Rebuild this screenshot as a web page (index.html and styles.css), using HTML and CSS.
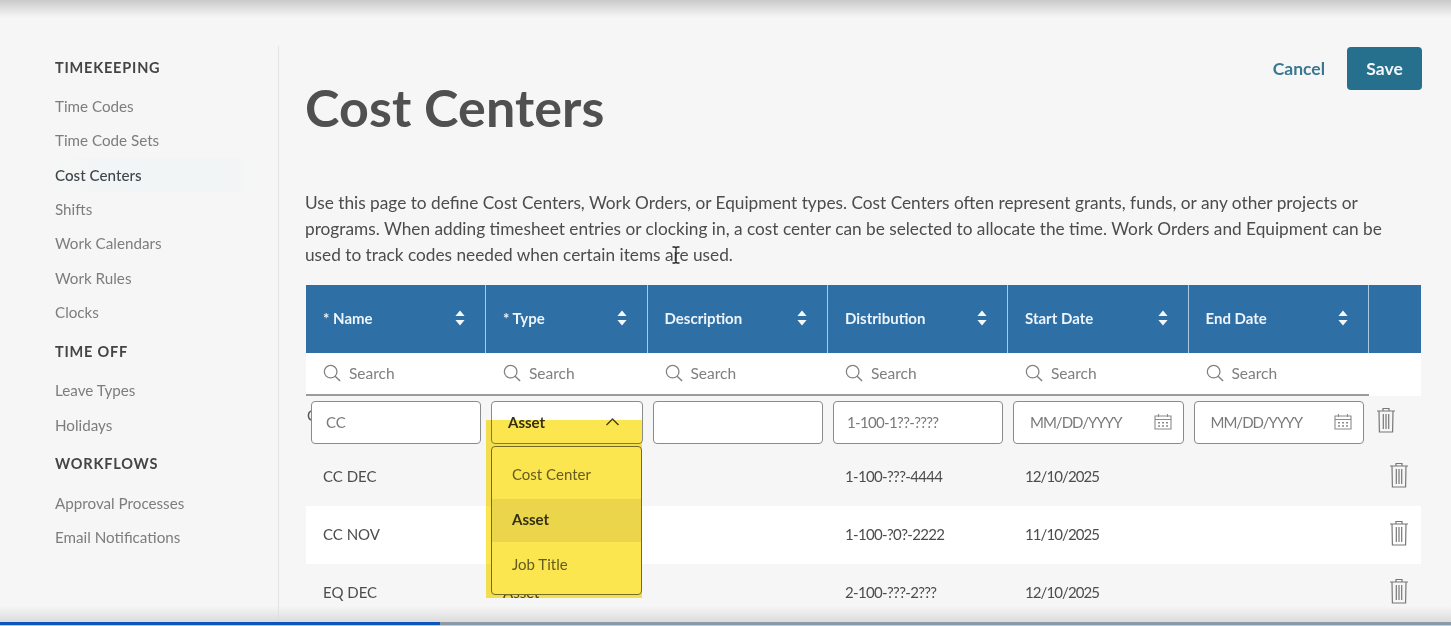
FILE: index.html
```html
<!DOCTYPE html>
<html lang="en">
<head>
<meta charset="utf-8">
<title>Cost Centers</title>
<link rel="stylesheet" href="styles.css">
</head>
<body>
<svg class="defs" width="0" height="0">
  <defs>
    <symbol id="sort" viewBox="0 0 10 16"><path d="M5 .5 9.600 6H.4zM.4 10h9.200L5 15.500z" fill="currentColor"/></symbol>
    <symbol id="search" viewBox="0 0 20 20"><circle cx="8.500" cy="8.500" r="7" fill="none" stroke="currentColor" stroke-width="1.400"/><path d="m13.500 13.500 5.500 5.500" fill="none" stroke="currentColor" stroke-width="1.600"/></symbol>
    <symbol id="cal" viewBox="0 0 18 17"><path d="M1 3h16v13H1zM1 6.500h16M4.500 1v3M13.500 1v3" fill="none" stroke="currentColor" stroke-width="1.100"/><path d="M4 9h2v1.500H4zM8 9h2v1.500H8zM12 9h2v1.500h-2zM4 12.300h2v1.500H4zM8 12.300h2v1.500H8zM12 12.300h2v1.500h-2z" fill="currentColor"/></symbol>
    <symbol id="trash" viewBox="0 0 20 26"><path d="M1 4h18M7 4V1.500h6V4M3 4l.4 21h13.200L17 4M7.300 7v15M10 7v15M12.700 7v15" fill="none" stroke="currentColor" stroke-width="1.200"/></symbol>
  </defs>
</svg>
<div class="page">
  <nav class="side">
    <h2 class="side-h">TIMEKEEPING</h2>
    <a class="side-i">Time Codes</a>
    <a class="side-i">Time Code Sets</a>
    <a class="side-i active">Cost Centers</a>
    <a class="side-i">Shifts</a>
    <a class="side-i">Work Calendars</a>
    <a class="side-i">Work Rules</a>
    <a class="side-i">Clocks</a>
    <h2 class="side-h">TIME OFF</h2>
    <a class="side-i">Leave Types</a>
    <a class="side-i">Holidays</a>
    <h2 class="side-h">WORKFLOWS</h2>
    <a class="side-i">Approval Processes</a>
    <a class="side-i">Email Notifications</a>
  </nav>
  <main class="main">
    <div class="top">
      <h1 class="title">Cost Centers</h1>
      <div class="actions">
        <button class="cancel">Cancel</button>
        <button class="save">Save</button>
      </div>
    </div>
    <p class="intro">Use this page to define Cost Centers, Work Orders, or Equipment types. Cost Centers often represent grants, funds, or any other projects or programs. When adding timesheet entries or clocking in, a cost center can be selected to allocate the time. Work Orders and Equipment can be used to track codes needed when certain items are used.</p>
    <div class="table">
      <div class="row head">
        <div class="th"><span>* Name</span><svg class="sort"><use href="#sort"/></svg></div>
        <div class="th"><span>* Type</span><svg class="sort"><use href="#sort"/></svg></div>
        <div class="th"><span>Description</span><svg class="sort"><use href="#sort"/></svg></div>
        <div class="th"><span>Distribution</span><svg class="sort"><use href="#sort"/></svg></div>
        <div class="th"><span>Start Date</span><svg class="sort"><use href="#sort"/></svg></div>
        <div class="th"><span>End Date</span><svg class="sort"><use href="#sort"/></svg></div>
        <div class="th"></div>
      </div>
      <div class="row filters">
        <div class="fc"><svg class="mag"><use href="#search"/></svg>Search</div>
        <div class="fc"><svg class="mag"><use href="#search"/></svg>Search</div>
        <div class="fc"><svg class="mag"><use href="#search"/></svg>Search</div>
        <div class="fc"><svg class="mag"><use href="#search"/></svg>Search</div>
        <div class="fc"><svg class="mag"><use href="#search"/></svg>Search</div>
        <div class="fc"><svg class="mag"><use href="#search"/></svg>Search</div>
        <div class="fc blank"></div>
      </div>
      <div class="row edit">
        <div class="ec"><span class="behind">C</span><div class="inp name">CC</div></div>
        <div class="ec"><div class="inp sel">Asset<svg class="chev" viewBox="0 0 14 8"><path d="M1 7l6-6 6 6" fill="none" stroke="currentColor" stroke-width="1.400"/></svg></div></div>
        <div class="ec"><div class="inp"></div></div>
        <div class="ec"><div class="inp dist">1-100-1??-????</div></div>
        <div class="ec"><div class="inp date">MM/DD/YYYY<svg class="cal"><use href="#cal"/></svg></div></div>
        <div class="ec"><div class="inp date">MM/DD/YYYY<svg class="cal"><use href="#cal"/></svg></div></div>
        <div class="ec tr"><svg class="trash"><use href="#trash"/></svg></div>
      </div>
      <div class="row data">
        <div class="td">CC DEC</div><div class="td"></div><div class="td"></div><div class="td dist">1-100-???-4444</div><div class="td date">12/10/2025</div><div class="td"></div>
        <div class="td del"><svg class="trash"><use href="#trash"/></svg></div>
      </div>
      <div class="row data alt">
        <div class="td">CC NOV</div><div class="td"></div><div class="td"></div><div class="td dist">1-100-?0?-2222</div><div class="td date">11/10/2025</div><div class="td"></div>
        <div class="td del"><svg class="trash"><use href="#trash"/></svg></div>
      </div>
      <div class="row data">
        <div class="td">EQ DEC</div><div class="td">Asset</div><div class="td"></div><div class="td dist">2-100-???-2???</div><div class="td date">12/10/2025</div><div class="td"></div>
        <div class="td del"><svg class="trash"><use href="#trash"/></svg></div>
      </div>
      <ul class="menu">
        <li>Cost Center</li>
        <li class="cur">Asset</li>
        <li>Job Title</li>
      </ul>
      <div class="hl"></div>
    </div>
  </main>
</div>
<div class="shade-top"></div>
<div class="shade-bot"></div>
<div class="progress"><div class="played"></div></div>
<svg class="ibeam" viewBox="0 0 9 18"><path d="M1 1h2.500L4.500 2l1-1H8M4.500 2v14M1 17h2.500l1-1 1 1H8" fill="none" stroke="#222" stroke-width="1.300"/></svg>
</body>
</html>
```
FILE: styles.css
```css
* { box-sizing: border-box; }
html, body { margin: 0; height: 626px; overflow: hidden; }
body { background: #f6f6f6; font-family: "Lato", "Liberation Sans", sans-serif; color: #4a4a4a; position: relative; }
.defs { position: absolute; }
.page { display: flex; height: 626px; padding-top: 46px; }

.side { width: 279px; flex: none; border-right: 1px solid #e3e3e3; padding-left: 55px; display: flex; flex-direction: column; }
.side-h { margin: 0; height: 43.600px; line-height: 43.600px; font-size: 14.500px; font-weight: 700; letter-spacing: .8px; color: #444; flex: none; }
.side-h:first-child { height: 42.800px; line-height: 44px; }
.side-i { height: 34.400px; line-height: 34.400px; font-size: 15.200px; color: #7d7d7d; flex: none; }
.side-i.active { color: #3f474c; background: linear-gradient(90deg, #f6f6f6, #f1f5f5 30%, #f1f5f5 85%, #f6f6f6); width: 198px; font-weight: 500; }

.main { flex: 1; padding-left: 26px; padding-right: 29px; min-width: 0; }
.top { display: flex; justify-content: space-between; align-items: flex-start; height: 144px; }
.title { margin: 29px 0 0; font-size: 52px; line-height: 64px; font-weight: 700; color: #505050; letter-spacing: .1px; }
.actions { display: flex; align-items: center; gap: 22px; margin-top: 1px; }
.cancel { border: 0; background: none; padding: 0; font: 700 17.500px "Lato", sans-serif; color: #3a7790; }
.save { width: 75px; height: 43px; border: 0; border-radius: 4px; background: #266f8d; color: #f2f7f9; font: 700 17.500px "Lato", sans-serif; }

.intro { margin: 0; width: 1100px; height: 95px; font-size: 17.250px; line-height: 25.800px; color: #4c4c4c; }

.table { position: relative; margin-left: 1px; width: 1115px; }
.row { display: grid; grid-template-columns: 180px 161.500px 180.500px 180px 180.500px 180px 52.500px; }
.head { height: 68px; background: #2e6fa6; }
.th { display: flex; align-items: center; justify-content: space-between; padding: 0 20px 2px 17px; color: #eef4f9; font-size: 15px; font-weight: 700; border-right: 1px solid #a9cbe4; }
.th:last-child { border: 0; }
.sort { width: 10px; height: 16px; color: #f4f7fa; }

.filters { height: 43px; }
.fc { background: #fff; display: flex; align-items: center; gap: 8px; padding: 0 0 1px 17px; font-size: 15.500px; color: #7f7f7f; border-bottom: 2px solid #9c9c9c; }
.fc.blank { border-bottom: 0; }
.mag { width: 18px; height: 18px; color: #808080; }

.edit { height: 52px; }
.ec { padding: 5px 5px 0; position: relative; }
.inp { height: 43px; border: 1.500px solid #8b8b8b; border-radius: 4px; background: #fff; padding: 0 0 2px 16px; display: flex; align-items: center; justify-content: space-between; font-size: 15px; color: #7a7a7a; position: relative; }
.inp.name { padding-left: 14px; }
.inp.sel { color: #333; font-weight: 700; }
.inp.dist { padding-left: 13px; letter-spacing: -.65px; }
.inp.date { letter-spacing: -1px; }
.behind { position: absolute; left: 1px; top: 10px; font-size: 15px; color: #555; }
.chev { width: 15px; height: 8px; margin-right: 22px; color: #444; }
.cal { width: 18px; height: 17px; margin-right: 11px; color: #8a8a8a; }
.tr { padding: 11px 0 0 7px; }
.trash { width: 20px; height: 26px; color: #777; display: block; }

.data { height: 58px; }
.td { display: flex; align-items: center; padding-left: 17px; padding-bottom: 2px; font-size: 15px; color: #4d4d4d; }
.td.dist { letter-spacing: -.65px; }
.td.date { letter-spacing: -.9px; }
.alt { background: #fff; }
.del { padding-left: 20px; padding-bottom: 4px; }

.menu { position: absolute; left: 185px; top: 161px; width: 151px; height: 149px; margin: 0; padding: 7px 0 0; list-style: none; border: 1.500px solid #777; border-radius: 4px; background: #fff; font-size: 15px; color: #666; }
.menu li { height: 45px; line-height: 41px; padding-left: 20px; }
.menu .cur { background: #eee; color: #333; font-weight: 700; height: 43px; margin: 0 0 2px; }
.hl { position: absolute; left: 180px; top: 135px; width: 156px; height: 178px; background: #fce650; mix-blend-mode: multiply; }

.shade-top { position: absolute; left: 0; right: 0; top: 0; height: 18px; background: linear-gradient(#c9c9c9, #e6e6e6 60%, #f6f6f6); }
.shade-bot { position: absolute; left: 0; right: 0; bottom: 4px; height: 16px; background: linear-gradient(rgba(246,246,246,0), #dcdcdc); }
.progress { position: absolute; left: 0; right: 0; bottom: 0; height: 4px; background: #8d9aa6; border-bottom: 1px solid #a9d4ef; }
.played { width: 440px; height: 3px; background: #0b55bd; }
.ibeam { position: absolute; left: 671px; top: 246px; width: 10px; height: 18px; }
```
